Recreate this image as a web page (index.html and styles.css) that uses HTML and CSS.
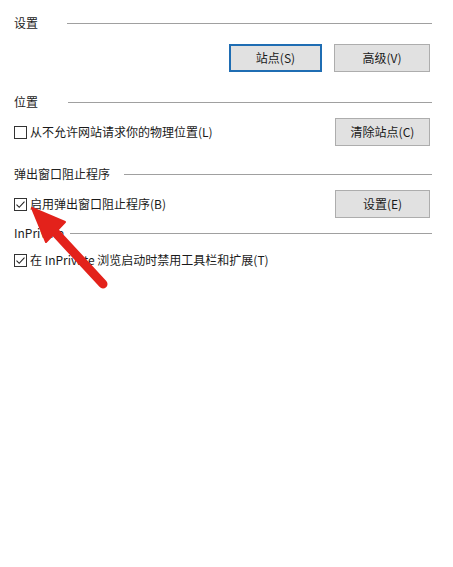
FILE: index.html
```html
<!DOCTYPE html>
<html lang="zh-CN">
<head>
<meta charset="utf-8">
<title>设置</title>
<link rel="stylesheet" href="styles.css">
</head>
<body>
<div class="page">
  <div class="head head-settings"><span class="label">设置</span><span class="rule"></span></div>
  <div class="btn-row row-top">
    <button class="btn btn-focus">站点(S)</button>
    <button class="btn btn-wide">高级(V)</button>
  </div>

  <div class="head head-location"><span class="label">位置</span><span class="rule"></span></div>
  <div class="opt-row row-loc">
    <label class="check"><span class="box"></span><span>从不允许网站请求你的物理位置(L)</span></label>
    <button class="btn">清除站点(C)</button>
  </div>

  <div class="head head-popup"><span class="label">弹出窗口阻止程序</span><span class="rule"></span></div>
  <div class="opt-row row-popup">
    <label class="check"><span class="box checked"><svg viewBox="0 0 13 13" width="13" height="13"><path d="M2.5 6.6 L5.2 9.3 L10.5 3.6" fill="none" stroke="#222" stroke-width="1.1"/></svg></span><span>启用弹出窗口阻止程序(B)</span></label>
    <button class="btn">设置(E)</button>
  </div>

  <div class="head head-private"><span class="label">InPrivate</span><span class="rule"></span></div>
  <div class="opt-row row-private">
    <label class="check"><span class="box checked"><svg viewBox="0 0 13 13" width="13" height="13"><path d="M2.5 6.6 L5.2 9.3 L10.5 3.6" fill="none" stroke="#222" stroke-width="1.1"/></svg></span><span>在 InPrivate 浏览启动时禁用工具栏和扩展(T)</span></label>
  </div>

  <svg class="arrow" viewBox="0 0 453 567" width="453" height="567">
    <line x1="54" y1="231" x2="103" y2="284" stroke="#e3221b" stroke-width="9" stroke-linecap="round"/>
    <polygon points="32,208 46,242 65,222" fill="#e3221b" stroke="#e3221b" stroke-width="2" stroke-linejoin="round"/>
  </svg>
</div>
</body>
</html>
```
FILE: styles.css
```css
html, body {
  margin: 0;
  padding: 0;
  background: #ffffff;
}

.page {
  position: relative;
  width: 453px;
  height: 567px;
  box-sizing: border-box;
  padding: 15px 21px 0 14px;
  font-family: "Noto Sans CJK SC", "Microsoft YaHei", sans-serif;
  font-size: 12px;
  color: #1a1a1a;
  overflow: hidden;
}

.head {
  display: flex;
  align-items: center;
  height: 16px;
  line-height: 16px;
}

.head .label {
  color: #222;
  white-space: nowrap;
}

.head .rule {
  flex: 1;
  height: 1px;
  background: #a0a0a0;
}

.head-settings .rule { margin-left: 29px; }
.head-location .rule { margin-left: 30px; }
.head-popup .rule { margin-left: 14px; }
.head-private .rule { margin-left: 6px; }

.head-location { margin-top: 22px; }
.head-popup { margin-top: 20px; }
.head-private { margin-top: 7px; }

.btn {
  box-sizing: border-box;
  height: 28px;
  width: 95px;
  margin: 0;
  padding: 0;
  background: #e1e1e1;
  border: 1px solid #adadad;
  border-radius: 0;
  font-family: inherit;
  font-size: 12px;
  color: #1a1a1a;
  line-height: 26px;
}

.btn-focus {
  width: 93px;
  border: 2px solid #1f6db3;
  line-height: 24px;
}

.btn-wide {
  width: 96px;
}

.btn-row {
  display: flex;
  justify-content: flex-end;
  gap: 12px;
  margin-top: 13px;
  padding-right: 2px;
}

.opt-row {
  display: flex;
  align-items: center;
  justify-content: space-between;
  padding-right: 2px;
  margin-top: 8px;
}

.row-private {
  margin-top: 11px;
  height: 16px;
}

.check {
  display: flex;
  align-items: center;
  gap: 3px;
  line-height: 16px;
  white-space: nowrap;
}

.box {
  box-sizing: border-box;
  width: 13px;
  height: 13px;
  border: 1px solid #333;
  background: #fff;
  display: inline-block;
  position: relative;
  flex: none;
}

.box svg {
  position: absolute;
  left: -1px;
  top: -1px;
}

.arrow {
  position: absolute;
  left: 0;
  top: 0;
  pointer-events: none;
}
```
